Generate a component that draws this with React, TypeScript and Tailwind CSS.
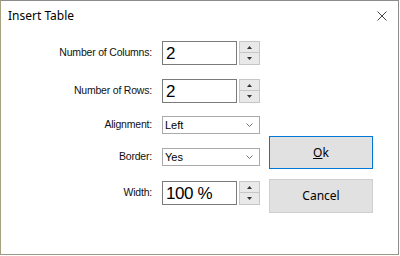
import React from 'react'

const ui = { fontFamily: '"Noto Sans", "Open Sans", sans-serif' }
const label = { fontFamily: '"Liberation Sans", Arial, sans-serif' }
const big = { fontFamily: '"Liberation Sans", Arial, sans-serif' }

const Label = ({ children }: { children: React.ReactNode }) => (
  <div className="w-[161px] pr-[10px] text-right text-[10.5px] tracking-[-0.2px] text-[#111]" style={label}>
    {children}
  </div>
)

const Spin = ({ value }: { value: string }) => (
  <div className="flex items-center">
    <div
      className="w-[75px] h-[24px] border border-[#7a7a7a] bg-white pl-[3px] flex items-center text-[17px] tracking-[-0.4px] text-black leading-none"
      style={big}
    >
      {value}
    </div>
    <div className="ml-[2px] flex flex-col w-[21px] h-[24px]">
      <div className="h-[12px] border border-[#c6c6c6] bg-[#e9e9e9] flex items-center justify-center">
        <svg width="5" height="3" viewBox="0 0 5 3"><path d="M2.5 0L5 3H0z" fill="#333" /></svg>
      </div>
      <div className="h-[12px] border border-t-0 border-[#c6c6c6] bg-[#e9e9e9] flex items-center justify-center">
        <svg width="5" height="3" viewBox="0 0 5 3"><path d="M0 0h5L2.5 3z" fill="#333" /></svg>
      </div>
    </div>
  </div>
)

const Select = ({ value }: { value: string }) => (
  <div
    className="w-[98px] h-[18px] border border-[#a9a9a9] bg-white flex items-center justify-between pl-[2px] pr-[6px] text-[11px] text-black"
    style={label}
  >
    <span>{value}</span>
    <svg width="7" height="4" viewBox="0 0 7 4"><path d="M0.5 0.5L3.5 3.5L6.5 0.5" stroke="#777" fill="none" /></svg>
  </div>
)

export default function App() {
  return (
    <div className="w-[400px] h-[256px] bg-white">
      <div className="w-[399px] h-[255px] border border-[#8c8c8c] border-l-[#a4a27c] border-b-[#9a9a84] bg-white flex flex-col">
        <div className="h-[29px] flex items-center justify-between pl-[7px] pr-[11px]">
          <span className="text-[12px] text-black" style={ui}>Insert Table</span>
          <svg width="10" height="10" viewBox="0 0 10 10">
            <path d="M0.5 0.5L9.5 9.5M9.5 0.5L0.5 9.5" stroke="#444" strokeWidth="1" />
          </svg>
        </div>
        <div className="flex">
          <div className="flex flex-col">
            <div className="mt-[11px] flex items-center">
              <Label>Number of Columns:</Label>
              <Spin value="2" />
            </div>
            <div className="mt-[14px] flex items-center">
              <Label>Number of Rows:</Label>
              <Spin value="2" />
            </div>
            <div className="mt-[13px] flex items-center">
              <Label>Alignment:</Label>
              <Select value="Left" />
            </div>
            <div className="mt-[14px] flex items-center">
              <Label>Border:</Label>
              <Select value="Yes" />
            </div>
            <div className="mt-[15px] flex items-center">
              <Label>Width:</Label>
              <Spin value="100 %" />
            </div>
          </div>
          <div className="ml-[9px] flex flex-col">
            <button
              className="mt-[106px] w-[104px] h-[33px] border border-[#0078d7] bg-[#e1e1e1] text-[12px] text-black"
              style={ui}
            >
              <span className="underline">O</span>k
            </button>
            <button
              className="mt-[10px] w-[104px] h-[34px] border border-[#cfcfcf] bg-[#e1e1e1] text-[12px] text-black"
              style={ui}
            >
              Cancel
            </button>
          </div>
        </div>
      </div>
    </div>
  )
}
